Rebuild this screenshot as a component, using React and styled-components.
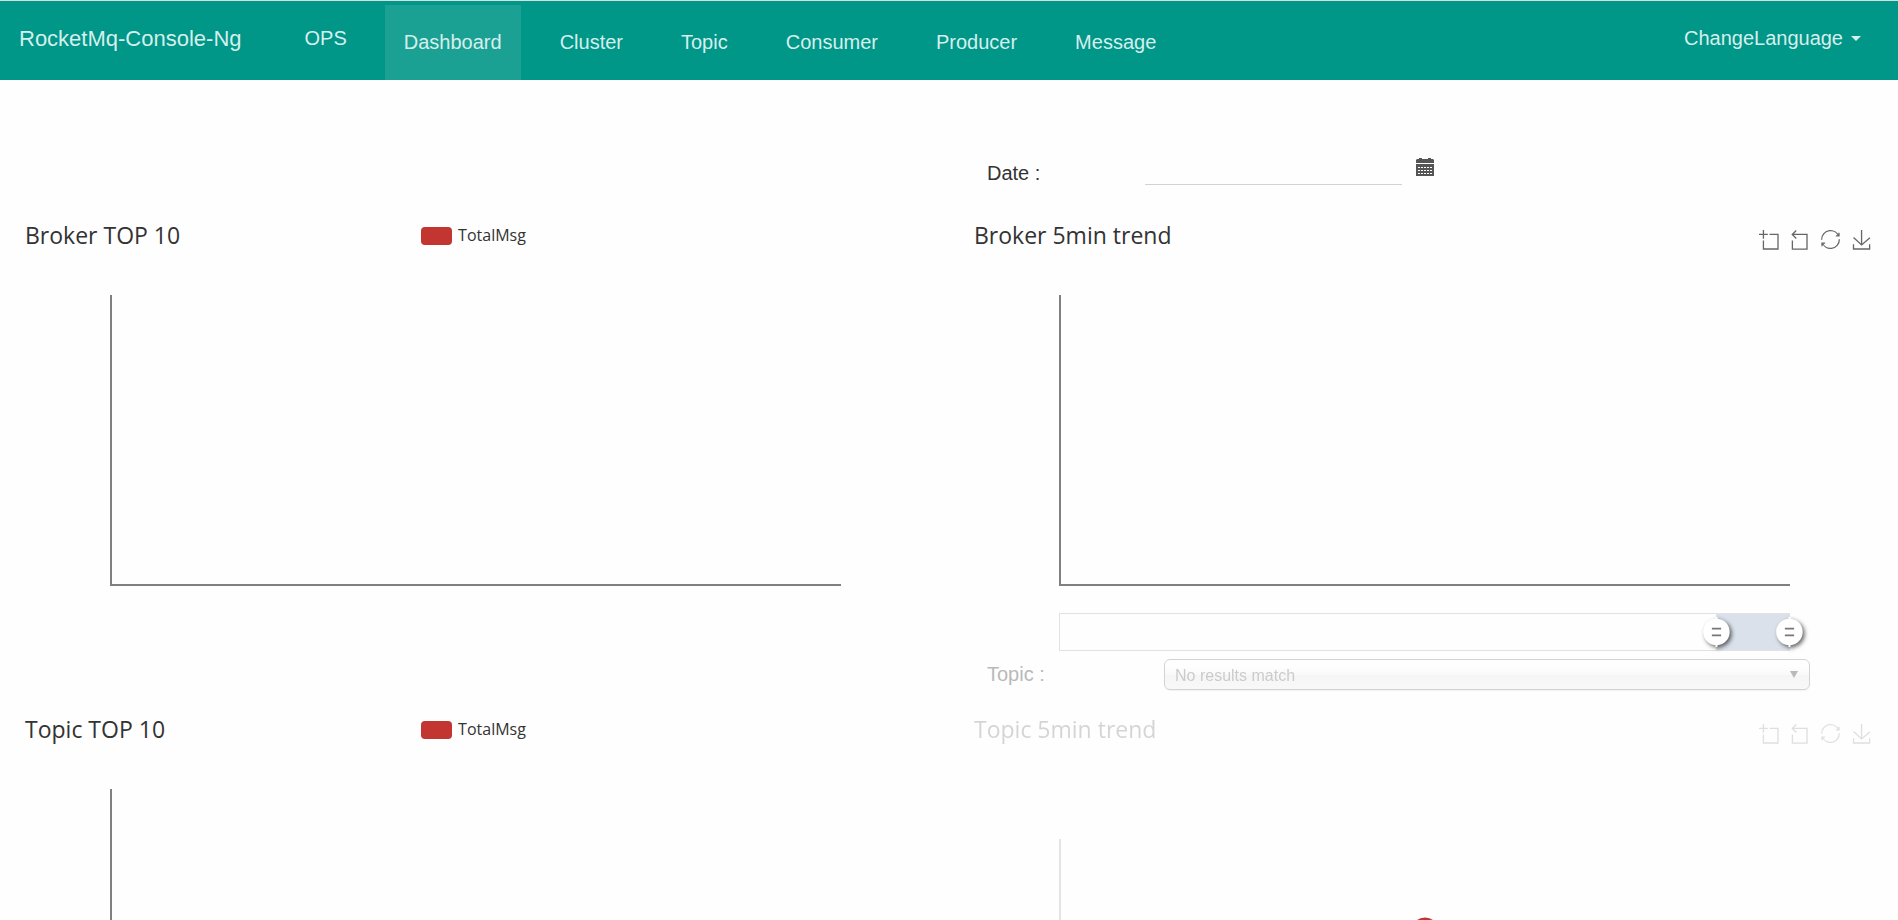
import React, { useState } from "react";
import styled, { createGlobalStyle, css, keyframes } from "styled-components";

const sans = `"Liberation Sans", Arial, sans-serif`;
const chartFont = `"Open Sans", "Noto Sans", sans-serif`;

const GlobalStyle = createGlobalStyle`
  *, *::before, *::after { box-sizing: border-box; }
  html { scrollbar-width: none; }
  body {
    margin: 0;
    background: #fefefe;
    color: #333;
    font-family: ${sans};
    font-size: 20px;
  }
  button, input, select { font: inherit; color: inherit; }
`;

const Navbar = styled.header`
  display: flex;
  align-items: flex-start;
  height: 80px;
  padding-right: 18px;
  border-top: 1px solid #d5dfdd;
  background: #009688;
  color: #d6efec;
`;

const navCell = css`
  display: flex;
  align-items: center;
  height: 75px;
  padding: 0 19px;
  color: inherit;
  text-decoration: none;
  white-space: nowrap;
`;

const Brand = styled.a`
  ${navCell}
  margin-right: 25px;
  font-size: 22px;
`;

const NavLink = styled.a`
  ${navCell}
  background: ${(p) => (p.$active ? "#1ba193" : "transparent")};
`;

const Menu = styled.ul`
  display: flex;
  gap: 20px;
  margin: 4px 0 0 19px;
  padding: 0;
  list-style: none;
`;

const LanguageButton = styled.button`
  ${navCell}
  gap: 8px;
  margin-left: auto;
  border: 0;
  background: none;
  cursor: pointer;
`;

const Caret = styled.span`
  border: 5px solid transparent;
  border-top-color: currentColor;
  border-bottom: 0;
`;

const Board = styled.main`
  display: grid;
  grid-template-columns: 1fr 1fr;
  padding-top: 78px;
`;

const FormRow = styled.div`
  grid-column: 2;
  display: flex;
  align-items: flex-start;
  height: ${(p) => p.$height}px;
  padding: 0 88px 0 38px;
`;

const TopicRow = styled(FormRow)`
  padding-top: 2px;
`;

const FieldLabel = styled.label`
  flex: none;
  width: ${(p) => p.$width}px;
  line-height: 30px;
  color: ${(p) => (p.$dim ? "#b9b9b9" : "#333")};
`;

const DateInput = styled.input`
  width: 257px;
  height: 27px;
  padding: 0;
  border: 0;
  border-bottom: 1px solid #d2d2d2;
  background: none;
  outline: none;
`;

const PickerButton = styled.button`
  display: flex;
  margin-left: 14px;
  padding: 0;
  border: 0;
  background: none;
  color: #555;
`;

const SelectBox = styled.div`
  position: relative;
  flex: 1;
  opacity: 0.5;
`;

const TopicSelect = styled.select`
  display: block;
  width: 100%;
  height: 31px;
  padding: 2px 36px 0 10px;
  border: 1px solid #aaa;
  border-radius: 6px;
  appearance: none;
  background: linear-gradient(#fff 20%, #f6f6f6 50%, #eee 52%, #f4f4f4 100%);
  box-shadow: 0 1px 1px rgba(0, 0, 0, 0.1);
  color: #999;
  font-size: 16px;
  opacity: 1;
`;

const SelectArrow = styled.span`
  position: absolute;
  top: 12px;
  right: 12px;
  border: 4px solid transparent;
  border-top: 7px solid #777;
  border-bottom: 0;
  pointer-events: none;
`;

const Chart = styled.section`
  position: relative;
  height: 438px;
  margin: 0 17px 0 19px;
  font-family: ${chartFont};
`;

const ChartHead = styled.div`
  display: grid;
  grid-template-columns: 1fr auto 1fr;
  align-items: start;
  height: ${(p) => (p.$tall ? 126 : 76)}px;
  padding: 0 10px 0 6px;
  opacity: ${(p) => (p.$faded ? 0.2 : 1)};
`;

const ChartTitle = styled.h2`
  margin: 0;
  font-size: 23px;
  font-weight: 400;
  line-height: 32px;
  white-space: nowrap;
`;

const Legend = styled.div`
  display: flex;
  align-items: flex-start;
  gap: 6px;
  padding-top: 8px;
  font-size: 16px;
  line-height: 16px;
`;

const Swatch = styled.span`
  width: 31px;
  height: 18px;
  border-radius: 4px;
  background: #c23531;
`;

const Toolbox = styled.div`
  grid-column: 3;
  display: flex;
  justify-content: flex-end;
  gap: 12px;
  padding-top: 11px;
`;

const ToolButton = styled.button`
  display: flex;
  padding: 0;
  border: 0;
  background: none;
  color: #666;
  cursor: pointer;
`;

const Plot = styled.div`
  height: ${(p) => (p.$short ? 241 : 291)}px;
  margin: 0 10%;
  border: solid #808080;
  border-width: 0 0 2px 2px;
  opacity: ${(p) => (p.$faded ? 0.2 : 1)};
`;

const ZoomTrack = styled.div`
  position: relative;
  height: 38px;
  margin: 27px 10% 0;
  border: 1px solid #e2e2e2;
`;

const ZoomWindow = styled.div`
  position: absolute;
  top: 0;
  bottom: 0;
  background: #dbe1eb;
`;

const Handle = styled.svg`
  position: absolute;
  top: 3px;
  width: 27px;
  height: 30px;
  margin-left: -13px;
  overflow: visible;
  filter: drop-shadow(2px 2px 2px rgba(0, 0, 0, 0.6));
`;

const ZoomInput = styled.input`
  position: absolute;
  inset: 0;
  width: 100%;
  height: 100%;
  margin: 0;
  opacity: 0;
  pointer-events: none;
  &::-webkit-slider-thumb { pointer-events: auto; }
`;

const spin = keyframes`
  to { transform: rotate(360deg); }
`;

const Loading = styled.div`
  position: absolute;
  inset: 0;
  display: flex;
  align-items: center;
  justify-content: center;
`;

const Spinner = styled.svg`
  animation: ${spin} 1s linear infinite paused;
`;

const TOOLS = [
  { name: "Zoom area", box: "0 0 58 58", d: "M0,13.5h26.9 M13.5,26.9V0 M32.1,13.5H58V58H13.5 V32.1" },
  { name: "Undo zoom", box: "3 0 58 58", d: "M22,1.4L9.9,13.5l12.3,12.3 M10.3,13.5H54.9v44.6 H10.3v-26" },
  {
    name: "Restore",
    box: "0 0 60 60",
    d: "M47,18.9h9.8V8.7 M56.3,20.1 C52.1,9,40.5,0.6,26.8,2.1C12.6,3.7,1.6,16.2,2.1,30.6 M13,41.1H3.1v10.2 M3.7,39.9c4.2,11.1,15.8,19.5,29.5,18 c14.2-1.6,25.2-14.1,24.7-28.5",
  },
  { name: "Save as image", box: "0 0 58 58", d: "M4.7,22.9L29.3,45.5L54.7,23.4M4.6,43.6L4.6,58L53.8,58L53.8,43.6M29.2,45.1L29.2,0" },
];

function ChartTools() {
  return (
    <Toolbox>
      {TOOLS.map((t) => (
        <ToolButton key={t.name} type="button" aria-label={t.name}>
          <svg width="19" height="19" viewBox={t.box} overflow="visible">
            <path d={t.d} fill="none" stroke="currentColor" strokeWidth="4" />
          </svg>
        </ToolButton>
      ))}
    </Toolbox>
  );
}

function CalendarIcon() {
  return (
    <svg width="18" height="18" viewBox="0 0 18 18">
      <path d="M1 1h2V0h3v1h6V0h3v1h2l1 1v3H0V2z M0 6h18v12H0z" fill="currentColor" />
      <path d="M2 9.5h14M2 12.5h14M2 15.5h14" stroke="#fefefe" strokeWidth="1" strokeDasharray="2 1" />
    </svg>
  );
}

function ZoomHandle({ at }) {
  return (
    <Handle viewBox="0.5 10.6 19 21.4" style={{ left: `${at}%` }}>
      <path
        fill="#fff"
        d="M10.7,11.9v-1.3H9.3v1.3c-4.9,0.3-8.8,4.4-8.8,9.4c0,5,3.9,9.1,8.8,9.4v1.3h1.3v-1.3c4.9-0.3,8.8-4.4,8.8-9.4C19.5,16.3,15.6,12.2,10.7,11.9z"
      />
      <path fill="#777" d="M13.3,24.4H6.7V23h6.6V24.4z M13.3,19.6H6.7v-1.4h6.6V19.6z" />
    </Handle>
  );
}

function DataZoom() {
  const [from, setFrom] = useState(90);
  const [to, setTo] = useState(100);
  return (
    <ZoomTrack>
      <ZoomWindow style={{ left: `${from}%`, right: `${100 - to}%` }} />
      <ZoomHandle at={from} />
      <ZoomHandle at={to} />
      <ZoomInput type="range" aria-label="Range start" value={from} onChange={(e) => setFrom(Math.min(+e.target.value, to))} />
      <ZoomInput type="range" aria-label="Range end" value={to} onChange={(e) => setTo(Math.max(+e.target.value, from))} />
    </ZoomTrack>
  );
}

function TopChart({ title }) {
  return (
    <Chart>
      <ChartHead>
        <ChartTitle>{title}</ChartTitle>
        <Legend>
          <Swatch />
          TotalMsg
        </Legend>
      </ChartHead>
      <Plot />
    </Chart>
  );
}

function TrendChart({ title, loading }) {
  return (
    <Chart>
      <ChartHead $faded={loading} $tall={loading}>
        <ChartTitle>{title}</ChartTitle>
        <ChartTools />
      </ChartHead>
      <Plot $faded={loading} $short={loading} />
      {loading ? (
        <Loading>
          <Spinner width="32" height="32" viewBox="0 0 32 32">
            <path d="M9 6.3A12 12 0 0 1 23 6.3" fill="none" stroke="#c23531" strokeWidth="5" />
          </Spinner>
        </Loading>
      ) : (
        <DataZoom />
      )}
    </Chart>
  );
}

const PAGES = ["Dashboard", "Cluster", "Topic", "Consumer", "Producer", "Message"];

export default function App() {
  return (
    <>
      <GlobalStyle />
      <Navbar>
        <Brand href="#">RocketMq-Console-Ng</Brand>
        <NavLink href="#ops">OPS</NavLink>
        <Menu>
          {PAGES.map((page) => (
            <li key={page}>
              <NavLink href={`#${page}`} $active={page === "Dashboard"}>
                {page}
              </NavLink>
            </li>
          ))}
        </Menu>
        <LanguageButton type="button">
          ChangeLanguage
          <Caret />
        </LanguageButton>
      </Navbar>
      <Board>
        <FormRow $height={61}>
          <FieldLabel htmlFor="date" $width={158}>
            Date :
          </FieldLabel>
          <DateInput id="date" type="text" />
          <PickerButton type="button" aria-label="Pick a date">
            <CalendarIcon />
          </PickerButton>
        </FormRow>
        <TopChart title="Broker TOP 10" />
        <TrendChart title="Broker 5min trend" />
        <TopicRow $height={56}>
          <FieldLabel htmlFor="topic" $width={177} $dim>
            Topic :
          </FieldLabel>
          <SelectBox>
            <TopicSelect id="topic" disabled>
              <option>No results match</option>
            </TopicSelect>
            <SelectArrow />
          </SelectBox>
        </TopicRow>
        <TopChart title="Topic TOP 10" />
        <TrendChart title="Topic 5min trend" loading />
      </Board>
    </>
  );
}
